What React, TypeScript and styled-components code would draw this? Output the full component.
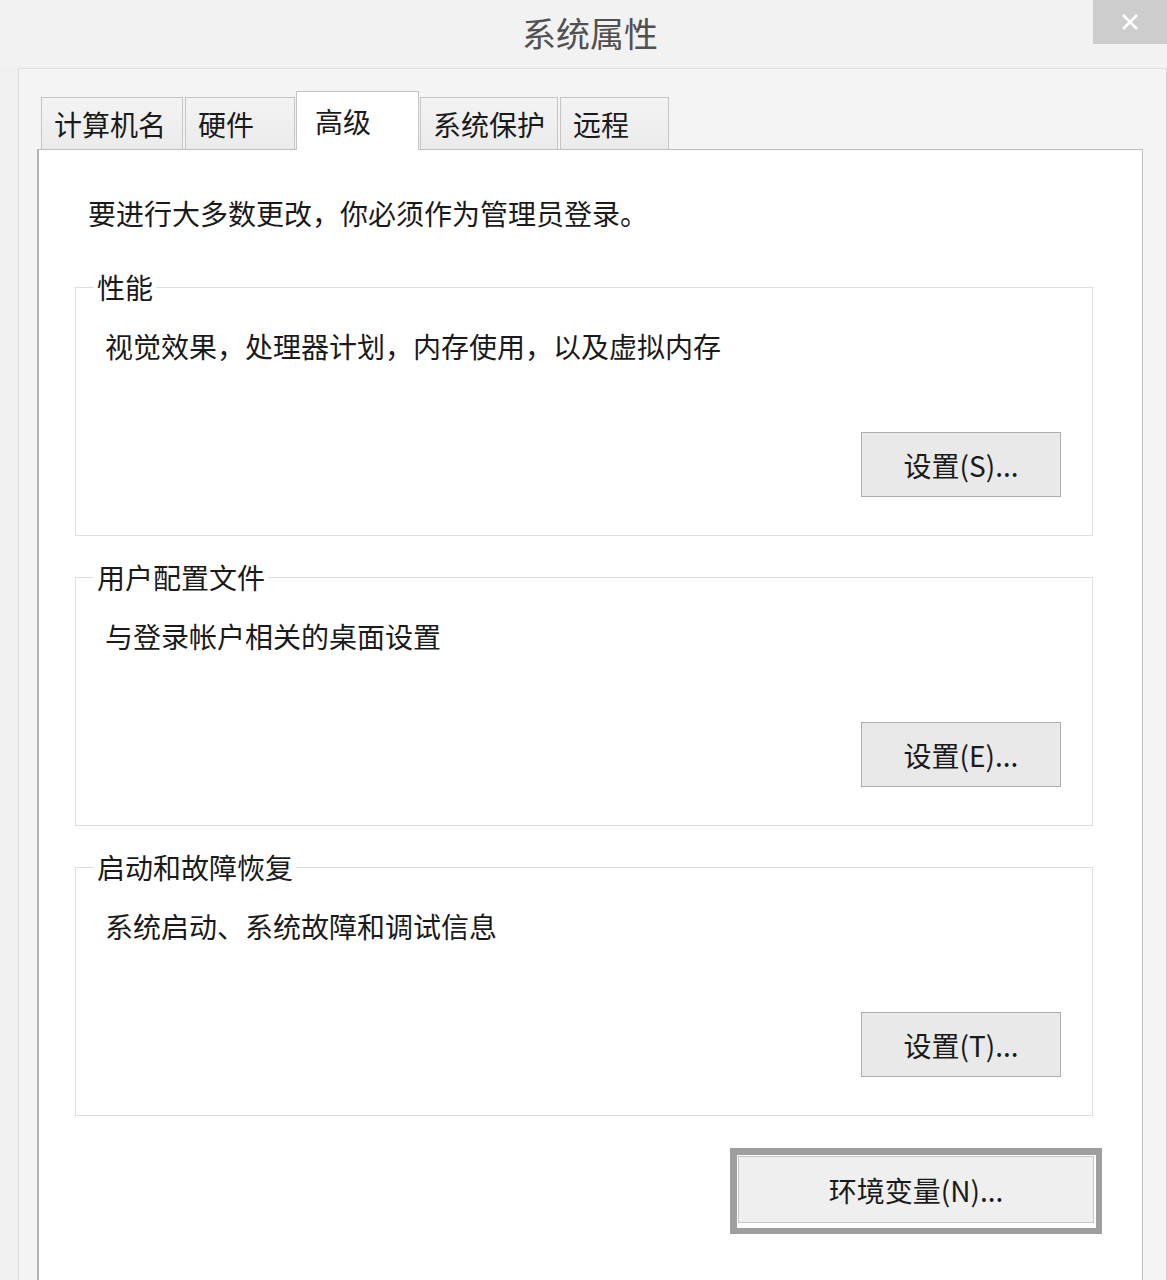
import React from "react";
import styled, { createGlobalStyle } from "styled-components";

const GlobalStyle = createGlobalStyle`
  html, body {
    margin: 0;
    padding: 0;
    background: #f0f0f0;
  }
  body {
    font-family: "Noto Sans CJK SC", "Noto Sans", sans-serif;
    color: #1c1c1c;
  }
  * { box-sizing: border-box; }
`;

const Window = styled.div`
  width: 1167px;
  height: 1280px;
  overflow: hidden;
  background: #f0f0f0;
  display: flex;
  flex-direction: column;
`;

const TitleBar = styled.div`
  height: 68px;
  flex: none;
  display: grid;
  grid-template-columns: 74px 1fr 74px;
  background: #f2f2f2;
`;

const Title = styled.div`
  align-self: center;
  text-align: center;
  padding-left: 13px;
  font-size: 34px;
  line-height: 40px;
  color: #505050;
  margin-top: -2px;
`;

const CloseButton = styled.button`
  width: 74px;
  height: 44px;
  border: none;
  padding: 0;
  background: #cdcdcd;
  display: flex;
  align-items: center;
  justify-content: center;
`;

const Frame = styled.div`
  flex: 1;
  margin-left: 18px;
  border-left: 1px solid #dcdcdc;
  border-top: 1px solid #e2e2e2;
  border-right: 1px solid #d4d4d4;
  background: #f4f4f4;
  padding: 22px 23px 0 18px;
  display: flex;
  flex-direction: column;
`;

const TabStrip = styled.div`
  display: flex;
  align-items: flex-end;
  gap: 2px;
  padding-left: 4px;
  margin-bottom: -1px;
  position: relative;
  z-index: 1;
`;

const Tab = styled.div<{ $active?: boolean; $w: number }>`
  width: ${(p) => p.$w}px;
  height: ${(p) => (p.$active ? 59 : 53)}px;
  display: flex;
  align-items: center;
  padding-left: ${(p) => (p.$active ? 18 : 12)}px;
  font-size: 28px;
  line-height: 34px;
  color: #1a1a1a;
  border: 1px solid #c4c4c4;
  border-bottom: ${(p) => (p.$active ? "none" : "1px solid #bdbdbd")};
  background: ${(p) =>
    p.$active ? "#ffffff" : "linear-gradient(#f3f3f3, #ebebeb)"};
  margin-left: ${(p) => (p.$active ? "-1px" : "0")};
  margin-right: ${(p) => (p.$active ? "-1px" : "0")};
`;

const Panel = styled.div`
  flex: 1;
  background: #ffffff;
  border: 1px solid #bcbcbc;
  border-left: 2px solid #b4b4b4;
  border-bottom: none;
  padding: 46px 49px 0 36px;
  display: flex;
  flex-direction: column;
`;

const Intro = styled.p`
  margin: 0 0 40px 13px;
  font-size: 28px;
  line-height: 34px;
  color: #1a1a1a;
`;

const Groups = styled.div`
  display: flex;
  flex-direction: column;
  gap: 24px;
`;

const Group = styled.fieldset`
  margin: 0;
  padding: 0;
  min-width: 0;
  border: 1px solid #dedede;
  display: flex;
  flex-direction: column;
`;

const Legend = styled.legend`
  margin-left: 18px;
  padding: 0 3px;
  font-size: 28px;
  line-height: 34px;
  color: #1a1a1a;
`;

const GroupBody = styled.div`
  padding: 25px 31px 38px 29px;
  display: flex;
  flex-direction: column;
`;

const Description = styled.div`
  font-size: 28px;
  line-height: 34px;
  color: #1a1a1a;
`;

const Button = styled.button`
  align-self: flex-end;
  margin-top: 69px;
  width: 200px;
  height: 65px;
  border: 1px solid #adadad;
  background: #e9e9e9;
  font-family: inherit;
  font-size: 28px;
  line-height: 34px;
  color: #1a1a1a;
  padding: 0;
`;

const EnvFrame = styled.div`
  align-self: flex-end;
  margin-top: 32px;
  margin-right: -9px;
  width: 372px;
  height: 86px;
  border: 6px solid #9f9f9f;
  border-left-width: 7px;
  border-top-width: 7px;
  background: #ffffff;
  padding: 1px 2px 5px 1px;
  display: flex;
`;

const EnvButton = styled.button`
  flex: 1;
  border: 1px solid #c6c6c6;
  background: #efefef;
  font-family: inherit;
  font-size: 28px;
  line-height: 34px;
  color: #1a1a1a;
  padding: 0;
`;

const tabs = [
  { label: "计算机名", w: 142 },
  { label: "硬件", w: 110 },
  { label: "高级", w: 123, active: true },
  { label: "系统保护", w: 138 },
  { label: "远程", w: 109 },
];

const groups = [
  { title: "性能", desc: "视觉效果，处理器计划，内存使用，以及虚拟内存", btn: "设置(S)..." },
  { title: "用户配置文件", desc: "与登录帐户相关的桌面设置", btn: "设置(E)..." },
  { title: "启动和故障恢复", desc: "系统启动、系统故障和调试信息", btn: "设置(T)..." },
];

export default function App() {
  return (
    <>
      <GlobalStyle />
      <Window>
        <TitleBar>
          <div />
          <Title>系统属性</Title>
          <CloseButton aria-label="关闭">
            <svg width="18" height="18" viewBox="0 0 18 18">
              <path d="M2 2 L16 16 M16 2 L2 16" stroke="#ffffff" strokeWidth="2.6" />
            </svg>
          </CloseButton>
        </TitleBar>
        <Frame>
          <TabStrip>
            {tabs.map((t) => (
              <Tab key={t.label} $w={t.w} $active={t.active}>
                {t.label}
              </Tab>
            ))}
          </TabStrip>
          <Panel>
            <Intro>要进行大多数更改，你必须作为管理员登录。</Intro>
            <Groups>
              {groups.map((g) => (
                <Group key={g.title}>
                  <Legend>{g.title}</Legend>
                  <GroupBody>
                    <Description>{g.desc}</Description>
                    <Button>{g.btn}</Button>
                  </GroupBody>
                </Group>
              ))}
            </Groups>
            <EnvFrame>
              <EnvButton>环境变量(N)...</EnvButton>
            </EnvFrame>
          </Panel>
        </Frame>
      </Window>
    </>
  );
}
